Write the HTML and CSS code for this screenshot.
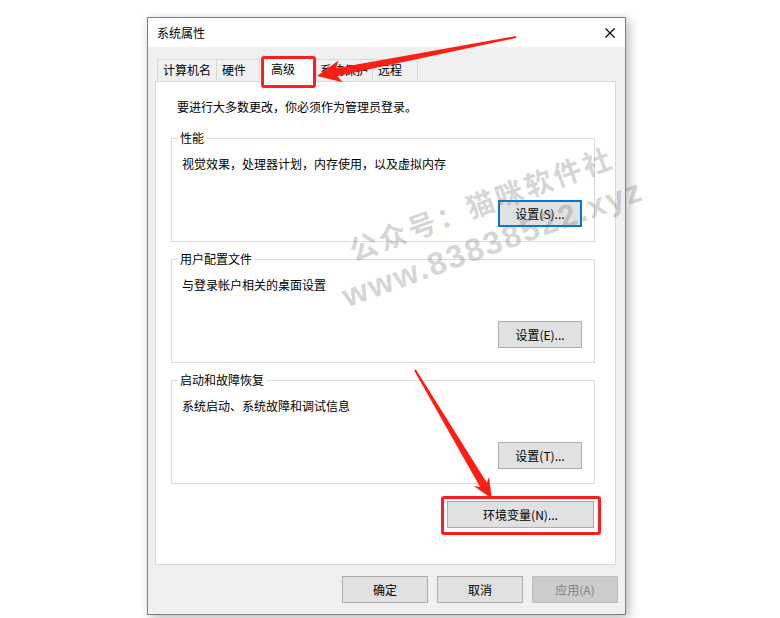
FILE: index.html
```html
<!DOCTYPE html>
<html lang="zh-CN">
<head>
<meta charset="utf-8">
<title>系统属性</title>
<link rel="stylesheet" href="styles.css">
</head>
<body>
<div class="window">
  <div class="titlebar">
    <span class="title">系统属性</span>
    <svg class="close" width="10" height="10" viewBox="0 0 10 10"><path d="M0.5 0.5 L9.5 9.5 M9.5 0.5 L0.5 9.5" stroke="#000" stroke-width="1.1" fill="none"/></svg>
  </div>
  <div class="body">
    <div class="tabs">
      <div class="tab tab-first w60">计算机名</div>
      <div class="tab w44">硬件</div>
      <div class="tab tab-active">高级</div>
      <div class="tab w58">系统保护</div>
      <div class="tab w45">远程</div>
    </div>
    <div class="panel">
      <div class="intro">要进行大多数更改，你必须作为管理员登录。</div>
      <div class="group">
        <div class="group-label">性能</div>
        <div class="group-desc">视觉效果，处理器计划，内存使用，以及虚拟内存</div>
        <button class="btn btn-group btn-focus">设置(S)...</button>
      </div>
      <div class="group">
        <div class="group-label">用户配置文件</div>
        <div class="group-desc">与登录帐户相关的桌面设置</div>
        <button class="btn btn-group">设置(E)...</button>
      </div>
      <div class="group">
        <div class="group-label">启动和故障恢复</div>
        <div class="group-desc">系统启动、系统故障和调试信息</div>
        <button class="btn btn-group">设置(T)...</button>
      </div>
      <div class="env-row">
        <button class="btn btn-env">环境变量(N)...</button>
      </div>
    </div>
    <div class="footer">
      <button class="btn btn-foot">确定</button>
      <button class="btn btn-foot">取消</button>
      <button class="btn btn-foot btn-disabled">应用(A)</button>
    </div>
  </div>
</div>

<div class="watermark">
  <div class="wm-line1">公众号：猫咪软件社</div>
  <div class="wm-line2">www.83838522.xyz</div>
</div>

<div class="hl hl-tab"></div>
<div class="hl hl-env"></div>

<svg class="arrows" width="780" height="618" viewBox="0 0 780 618">
  <polygon fill="#ff1e14" points="515.8,36 335.8,68.3 338.5,60.6 317,76 342.7,82.2 337.4,76.1 516.2,38"/>
  <polygon fill="#ff1e14" points="414.1,370.5 480.1,486.9 473.7,485.9 491.7,498.5 489.1,476.7 486.9,482.8 415.9,369.5"/>
</svg>
</body>
</html>
```
FILE: styles.css
```css
* { box-sizing: border-box; }
html, body { margin: 0; padding: 0; background: #fff; }
body {
  width: 780px;
  height: 618px;
  overflow: hidden;
  position: relative;
  font-family: "Noto Sans CJK SC", "Noto Sans", sans-serif;
  font-size: 12px;
  color: #000;
}
.window {
  margin: 17px 0 0 147px;
  width: 479px;
  height: 598px;
  border: 1px solid #7f7f7f;
  background: #f0f0f0;
  box-shadow: 3px 3px 10px rgba(0,0,0,0.28);
}
.titlebar {
  height: 29px;
  background: #fff;
  display: flex;
  align-items: center;
  justify-content: space-between;
  padding: 0 10px 0 9px;
}
.title { line-height: 16px; }
.close { display: block; }
.body { padding: 12px 9px 0 7px; }
.tabs {
  display: flex;
  align-items: flex-end;
  height: 22px;
  margin-left: 2px;
  position: relative;
  z-index: 1;
}
.tab {
  height: 22px;
  border-top: 1px solid #d9d9d9;
  border-right: 1px solid #d9d9d9;
  background: #f0f0f0;
  padding-left: 5px;
  line-height: 20px;
  white-space: nowrap;
}
.tab-first { border-left: 1px solid #d9d9d9; }
.w60 { width: 60px; }
.w44 { width: 44px; }
.w58 { width: 58px; }
.w45 { width: 45px; }
.tab-active {
  width: 58px;
  height: 25px;
  margin: 0 -2px -1px -2px;
  background: #fff;
  border-left: 1px solid #d9d9d9;
  padding-left: 11px;
  padding-top: 1px;
  position: relative;
  z-index: 2;
}
.panel {
  width: 461px;
  height: 484px;
  background: #fff;
  border: 1px solid #d9d9d9;
  padding: 17px 20px 0 15px;
}
.intro {
  line-height: 16px;
  padding-left: 6px;
  margin-bottom: 23px;
}
.group {
  height: 104px;
  border: 1px solid #dcdcdc;
  display: flex;
  flex-direction: column;
  align-items: flex-start;
  margin-bottom: 17px;
}
.group-label {
  margin: -9px 0 0 6px;
  padding: 0 2px;
  background: #fff;
  line-height: 16px;
}
.group-desc {
  margin: 10px 0 0 10px;
  line-height: 16px;
}
.btn {
  font-family: "Noto Sans CJK SC", "Noto Sans", sans-serif;
  font-size: 12px;
  color: #000;
  background: #e1e1e1;
  border: 1px solid #adadad;
  border-radius: 0;
  padding: 0;
  height: 27px;
  line-height: 16px;
  margin: 0;
}
.btn-group {
  width: 84px;
  align-self: flex-end;
  margin: auto 12px 14px 0;
}
.btn-focus { border: 2px solid #0078d7; }
.env-row {
  display: flex;
  justify-content: flex-end;
  margin-right: 1px;
}
.btn-env { width: 147px; }
.footer {
  display: flex;
  justify-content: flex-end;
  gap: 9px;
  margin-top: 11px;
  margin-right: -2px;
}
.btn-foot { width: 86px; }
.btn-disabled {
  background: #cccccc;
  border-color: #bfbfbf;
  color: #838383;
}
.watermark {
  position: absolute;
  z-index: 10;
  left: 322px;
  top: 238px;
  transform-origin: 0 0;
  transform: rotate(-20deg);
  color: rgba(110,110,110,0.3);
  font-weight: bold;
  white-space: nowrap;
  pointer-events: none;
}
.wm-line1 {
  font-size: 28px;
  line-height: 42px;
  letter-spacing: 3px;
  padding-left: 22px;
}
.wm-line2 {
  font-family: "Liberation Sans", Arial, sans-serif;
  font-size: 32px;
  line-height: 42px;
  letter-spacing: 2px;
}
.hl {
  position: absolute;
  z-index: 11;
  border: 3px solid #ff1e1e;
  border-radius: 3px;
}
.hl-tab { left: 261px; top: 56px; width: 55px; height: 32px; }
.hl-env { left: 441px; top: 496px; width: 160px; height: 39px; }
.arrows {
  position: absolute;
  z-index: 12;
  left: 0;
  top: 0;
  pointer-events: none;
}
```
